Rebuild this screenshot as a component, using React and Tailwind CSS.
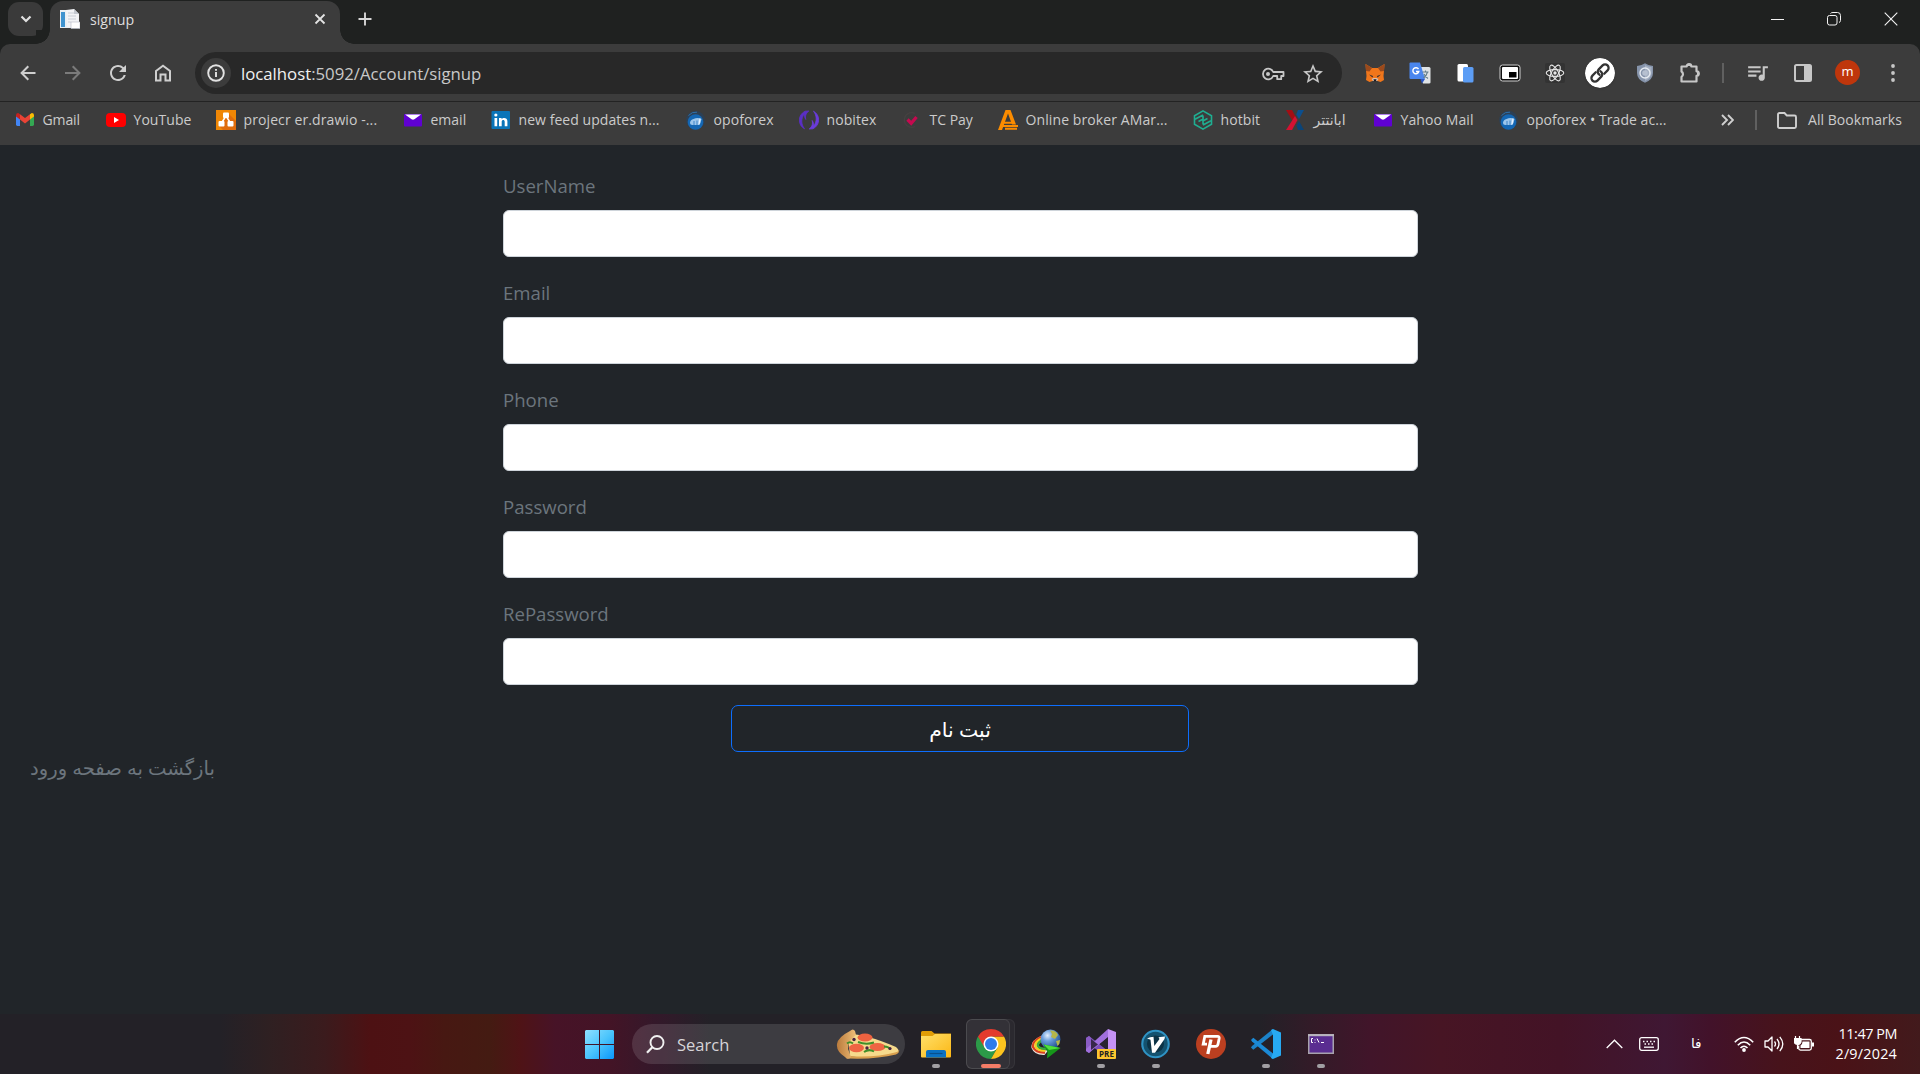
import React from "react";
import { MdRefresh, MdStarBorder, MdQueueMusic } from "react-icons/md";

const S = ({ w = 20, h = w, vb = `0 0 ${w} ${h}`, className = "", children }) => (
  <svg width={w} height={h} viewBox={vb} fill="none" className={`block shrink-0 ${className}`}>
    {children}
  </svg>
);

/* ---------- bookmark icons ---------- */
const Gmail = () => (
  <S>
    <path d="M1 5v9.600q0 1.400 1.400 1.400H5V9z" fill="#4285f4" />
    <path d="M15 9v7h2.600q1.400 0 1.400-1.400V5z" fill="#34a853" />
    <path d="M1 5.200q0-2.200 2.200-2.200L5 4.200V9.500L1 6.600z" fill="#c5221f" />
    <path d="M15 4.200L16.800 3Q19 3 19 5.200v1.400l-4 2.900z" fill="#fbbc04" />
    <path d="M5 4.200l5 3.900 5-3.900v5.300l-5 3.900-5-3.900z" fill="#ea4335" />
  </S>
);
const YouTube = () => (
  <S>
    <rect y="3" width="20" height="14" rx="4" fill="#f00" />
    <path d="M8 7v6l5-3z" fill="#fff" />
  </S>
);
const Drawio = () => (
  <S>
    <rect width="20" height="20" fill="#f08705" />
    <path d="M12 3l8 8v9H7l-4-4 6-8z" fill="#df6c0c" />
    <path d="M10 6L5.500 13M10 6l4.500 7" stroke="#fff" strokeWidth="1.500" />
    <rect x="7" y="2.500" width="6" height="5.500" rx="1" fill="#fff" />
    <rect x="2.500" y="11" width="6" height="5.500" rx="1" fill="#fff" />
    <rect x="11.500" y="11" width="6" height="5.500" rx="1" fill="#fff" />
  </S>
);
const YMail = () => (
  <S>
    <rect x="1" y="4" width="18" height="12.500" rx="1" fill="#5f01d1" />
    <path d="M2 4.500h16l-6.600 4.800q-1.400.8-2.800 0z" fill="#fff" />
  </S>
);
const LinkedIn = () => (
  <S>
    <rect x="0.500" y="1" width="18.500" height="18" rx="1" fill="#0a74b8" />
    <path d="M3.500 8h2.700v8.300H3.500zM8 8h2.600v1.200c1.200-2 5.800-2 5.800 2v5.100h-2.700v-4.600c0-2.300-3-2.100-3 0v4.600H8z" fill="#fff" />
    <circle cx="4.850" cy="5" r="1.600" fill="#fff" />
  </S>
);
const Opo = () => (
  <S>
    <circle cx="9.500" cy="10" r="9.300" fill="#2c4056" />
    <circle cx="9.500" cy="12" r="7.800" fill="#1467b4" />
    <path d="M4 12.500q.5-3 3.500-3.500 4-2 8 0-.5 4-2.500 6H6.500Q4 15 4 12.500z" fill="#9cc6ec" />
    <path d="M8 11v4M11 10.500V15" stroke="#3d84c8" strokeWidth="1" />
    <path d="M14 8.500l-1 6" stroke="#e9f4ff" strokeWidth="1.200" />
    <path d="M2.500 5.500Q6 1.500 11 2.200" stroke="#2f6fa8" strokeWidth="1" />
  </S>
);
const Nobitex = () => (
  <S>
    <path d="M5.500 18.800C-1.500 15 -1.500 5 6 1.200L9.800 1C6.800 3.500 6 6 6.800 9.500 5.500 7.500 5 5 5.500 3.800 2 8 1.800 14 5.500 18.800z" fill="#5b2fc6" stroke="#5b2fc6" strokeWidth=".8" />
    <path d="M14.500 1.200C21.500 5 21.500 15 14 18.800L10.200 19C13.200 16.500 14 14 13.200 10.500 14.500 12.500 15 15 14.500 16.200 18 12 18.200 6 14.500 1.200z" fill="#6b3bdc" stroke="#6b3bdc" strokeWidth=".8" />
  </S>
);
const TCPay = () => (
  <S>
    <path d="M13 3.500A7.300 7.300 0 1 0 13 16.500" stroke="#454141" strokeWidth="1.300" />
    <path d="M5.500 9.500l3.700 3.700 5.300-6.200" stroke="#c5094f" strokeWidth="3.300" />
  </S>
);
const AMarkets = () => (
  <S>
    <path d="M0 20L7.500 0h5L18 14.500h-4L10 3.500 4 20z" fill="#fb8c00" />
    <path d="M5 12.800h11M4.500 16h15.500M7 18.800h12" stroke="#fb8c00" strokeWidth="1.900" />
  </S>
);
const Hotbit = () => (
  <S>
    <path d="M10 .9l8.500 4.800v8.600L10 19.100l-8.500-4.800V5.700z" stroke="#1fae91" strokeWidth="1.600" />
    <path d="M2 9.300l8-4.300M18 10.700l-8 4.300M5.500 11.500L10 9v5.500M14.500 8.500L10 11V5.500" stroke="#1fae91" strokeWidth="1.600" />
  </S>
);
const XM = () => (
  <S>
    <path d="M0 0h6l4 7.500-2.500 5z" fill="#a30d14" />
    <path d="M0 20h6l5.500-10L9 6z" fill="#d31232" />
    <path d="M12 0h6l-5 9-2.800-4.500z" fill="#0b4f8f" />
    <path d="M12 20h6l-5-9-2.500 4.500z" fill="#0a4478" />
  </S>
);

const bookmarks = [
  [Gmail, "Gmail", "w-[91px]", "tracking-[-0.1px]"],
  [YouTube, "YouTube", "w-[110px]", "tracking-[0.05px]"],
  [Drawio, "projecr er.drawio -...", "w-[187px]", "tracking-[0.1px]"],
  [YMail, "email", "w-[88px]", "tracking-[0px]"],
  [LinkedIn, "new feed updates n...", "w-[195px]", "tracking-[0.05px]"],
  [Opo, "opoforex", "w-[113px]", "tracking-[0.1px]"],
  [Nobitex, "nobitex", "w-[103px]", "tracking-[0.1px]"],
  [TCPay, "TC Pay", "w-[96px]", "tracking-[0px]"],
  [AMarkets, "Online broker AMar...", "w-[195px]", "tracking-[0.1px]"],
  [Hotbit, "hotbit", "w-[93px]", "tracking-[0.1px]"],
  [XM, "ابانتتر", "w-[87px]", "tracking-normal"],
  [YMail, "Yahoo Mail", "w-[126px]", "tracking-[0.1px]"],
  [Opo, "opoforex • Trade ac...", "w-[200px]", "tracking-[0.05px]"],
];

/* ---------- extension icons ---------- */
const Fox = () => (
  <S>
    <path d="M.5 1l6.500 4h6l6.500-4-.5 6.500L18.500 13l.5 4-3.500 2-3-1h-5l-3 1L1 17l.5-4L1 7.500z" fill="#f0761b" />
    <path d="M.5 1l6.500 4L4.500 8.500 1 8zM19.500 1L13 5l2.500 3.500L19 8z" fill="#9b4a1c" />
    <path d="M4 11.500l4 1.500-.5 1.500zM16 11.500L12 13l.5 1.500z" fill="#2b2b35" />
    <path d="M6.500 16l2-1h3l2 1-1.500 2H8z" fill="#d8c1b2" />
    <path d="M8.500 16.300h3l-.5 2H9z" fill="#1b1b22" />
  </S>
);
const Translate = () => (
  <S w={22}>
    <path d="M8 5h12q1.500 0 1.500 1.500v14q0 1-1.500 1h-6z" fill="#dfe3e6" />
    <path d="M1.500.5H11L16 17H1.500Q.5 17 .5 16V1.500q0-1 1-1z" fill="#4a86ee" />
    <path d="M11.500 17H16l-3 4.500z" fill="#2a56c6" />
    <path d="M9.500 7.200A3 3 0 1 0 9.800 9.500H7" stroke="#fff" strokeWidth="1.400" />
    <path d="M13.500 10h6M16.500 8.500V10M18.500 10q-1 4-4 6M15 12q1.500 3 4 4.500" stroke="#607d8b" strokeWidth="1.100" />
  </S>
);
const Copy = () => (
  <S>
    <rect x="2.500" y="1" width="10.500" height="17.500" rx="1.500" fill="#fff" />
    <rect x="8" y="4" width="10.500" height="15.500" rx="1.500" fill="#5c9df5" />
  </S>
);
const Pip = () => (
  <S w={22}>
    <rect x="1" y="3" width="20" height="16" rx="2.500" fill="#111" stroke="#cfcfcf" />
    <rect x="3" y="5" width="16" height="12" rx="1" fill="#fff" />
    <rect x="10" y="10" width="7.500" height="5.500" fill="#000" />
  </S>
);
const ReactIcon = () => (
  <S>
    <rect width="20" height="20" rx="2" fill="#333" />
    <g stroke="#e8e8e8" strokeWidth="1.100">
      <ellipse cx="10" cy="10" rx="8.800" ry="3.400" />
      <ellipse cx="10" cy="10" rx="8.800" ry="3.400" transform="rotate(60 10 10)" />
      <ellipse cx="10" cy="10" rx="8.800" ry="3.400" transform="rotate(120 10 10)" />
    </g>
    <circle cx="10" cy="10" r="1.700" fill="#e8e8e8" />
  </S>
);
const Link = () => (
  <S w={30} className="rounded-full shadow">
    <circle cx="15" cy="15" r="15" fill="#fff" />
    <g transform="rotate(-45 15 15)" stroke="#333" strokeWidth="2.300" strokeLinecap="round">
      <path d="M12.500 11.500H7.800a3.500 3.500 0 0 0 0 7h5.500a3.500 3.500 0 0 0 3.300-4.500" />
      <path d="M17.500 18.500h4.700a3.500 3.500 0 0 0 0-7h-5.500a3.500 3.500 0 0 0-3.300 4.500" />
    </g>
  </S>
);
const Shield = () => (
  <S>
    <path d="M10 .3q4 2.700 8 2.700v7q0 6.500-8 9.800Q2 16.500 2 10V3q4 0 8-2.700z" fill="#8694ab" />
    <path d="M10 2q3 2 6.500 2v6q0 5-6.500 8z" fill="#a5b0c2" />
    <circle cx="10" cy="10" r="5" stroke="#e6ebf2" strokeWidth="1.400" />
    <circle cx="10" cy="10" r="2.800" fill="#b6c0d0" />
  </S>
);
const Puzzle = () => (
  <S w={22}>
    <path d="M2.500 4.500h5.200a2.200 2.200 0 0 1 4.600 0h5.200v4.800a2.200 2.200 0 0 1 0 4.600v5.600h-15v-4.600a3.200 3.200 0 0 0 0-5.400z" stroke="#c7c7c7" strokeWidth="2.200" strokeLinejoin="round" />
    <path d="M8 4V3q2-2 4 0v1zM18 9h1q2.500 2.500 0 5h-1z" fill="#c7c7c7" />
  </S>
);
const SidePanel = () => (
  <S>
    <rect x="2" y="2" width="16" height="16" rx="1.500" stroke="#c7c7c7" strokeWidth="2" />
    <rect x="11" y="2" width="7" height="16" fill="#c7c7c7" />
  </S>
);

/* ---------- taskbar icons ---------- */
const Start = () => (
  <S w={29}>
    <defs>
      <linearGradient id="win" x1="0" y1="0" x2="29" y2="29" gradientUnits="userSpaceOnUse">
        <stop stopColor="#8fe0ff" />
        <stop offset=".5" stopColor="#4cc5fc" />
        <stop offset="1" stopColor="#0a96fb" />
      </linearGradient>
    </defs>
    <path d="M1 0h13v14H0V1zM15 0h13l1 1v13H15zM0 15h14v14H1l-1-1zM15 15h14v13l-1 1H15z" fill="url(#win)" />
  </S>
);
const Pizza = () => (
  <S w={64} h={30}>
    <defs>
      <linearGradient id="crust" x1="0" y1="0" x2="1" y2="0">
        <stop stopColor="#b97a3c" />
        <stop offset="1" stopColor="#f0bf78" />
      </linearGradient>
    </defs>
    <path d="M12 5Q30 5 60 18q5 4 0 6-22 6-46 3.500z" fill="#f6da8c" />
    <path d="M14 27q24 2 47-4 2-1 2-2.500 1 3-3 5-20 5-47 4z" fill="#d9a04e" />
    <path d="M14 2q3-3 5 0l1 4q-8 6-8 14 2 5 3 8-3 4-6 0Q0 22 1 15 2 8 14 2z" fill="url(#crust)" />
    <ellipse cx="29" cy="8.500" rx="7.500" ry="4" fill="#ed6240" />
    <ellipse cx="20.500" cy="19" rx="7.500" ry="4.200" fill="#ee6543" />
    <ellipse cx="41.500" cy="18" rx="8" ry="4" fill="#ee6543" />
    <path d="M11 14.500q3-2.500 6 0M22 13q8 3 16 .5M28 23q5-3.500 10-.5M48 17.500q5 0 6 3" stroke="#3f8f2a" strokeWidth="2" />
    <circle cx="18" cy="10.500" r="1.700" fill="#4b2342" />
    <circle cx="31" cy="19" r="1.700" fill="#4b2342" />
    <circle cx="54" cy="19.500" r="1.600" fill="#4b2342" />
  </S>
);
const Folder = () => (
  <S w={30}>
    <defs>
      <linearGradient id="fold" x1="0" y1="0" x2="1" y2="1">
        <stop stopColor="#ffe06a" />
        <stop offset="1" stopColor="#fcb714" />
      </linearGradient>
    </defs>
    <path d="M0 3.500Q0 2 1.500 2h9l3 2.500H30V12H0z" fill="#e19d06" />
    <path d="M0 7h11.500L14 5h16v22.500q0 1-1 1H1q-1 0-1-1z" fill="url(#fold)" />
    <path d="M5 28.500V23q0-2 2-2h16q2 0 2 2v5.500z" fill="#0a71c4" />
    <path d="M8.500 24.500h13" stroke="#08508e" strokeWidth="1.200" />
  </S>
);
const Chrome = () => (
  <S w={30}>
    <path d="M15 30A15 15 0 0 1 2 7.500L15 15l6.500 3.800z" fill="#2c9a48" />
    <path d="M15 7.500h13A15 15 0 0 1 15 30l6.500-11.200z" fill="#fcc31e" />
    <path d="M15 7.500H28Q24 0 15 0 6 0 2 7.500l6.500 11z" fill="#e33b2e" />
    <circle cx="15" cy="15" r="7.500" fill="#fff" />
    <circle cx="15" cy="15" r="6" fill="#2f7bea" />
  </S>
);
const Idm = () => (
  <S w={30}>
    <defs>
      <radialGradient id="globe" cx=".35" cy=".3" r=".8">
        <stop stopColor="#e3efff" />
        <stop offset=".35" stopColor="#6b9fde" />
        <stop offset="1" stopColor="#16407f" />
      </radialGradient>
    </defs>
    <path d="M10 7Q-1 12 .5 19q3 7.500 13 7l4-5q-8 1.500-10-2-1-4 4-8z" fill="#e9e4dc" />
    <path d="M10 8Q1 12.500 2 18q3 6 12 5.500" stroke="#d8401f" strokeWidth="2.400" />
    <path d="M10 9.800Q3.500 13.500 4.500 17.500q2.500 4.500 10 4" stroke="#f5cf1b" strokeWidth="2.400" />
    <path d="M10.500 11.500Q6 14.500 7 17q2 3.500 8 2.500" stroke="#3caa3a" strokeWidth="2.400" />
    <circle cx="19.500" cy="10.500" r="10" fill="url(#globe)" />
    <path d="M19 1.500q6-.5 8 4.500l-3 4-4-2 1-3zM25 12l4-1q0 4-2.500 6z" fill="#b5b54a" />
    <path d="M12.500 15.500l17 3.500L16 29.500l.5-6.500z" fill="#16961a" />
    <path d="M12.500 15.500l17 3.500-11.500 2z" fill="#4fe03c" />
  </S>
);
const VisualStudio = () => (
  <S w={30}>
    <path d="M0 9l3-2 19 15v8L0 12z" fill="#7b4fb8" />
    <path d="M0 9l3-2 2 2v13l-2 2-3-2z" fill="#8a5cc4" />
    <path d="M3 24L22 8V0L0 20v2z" fill="#a06fdc" />
    <path d="M5 10l7 5.500L5 21z" fill="#37284b" />
    <path d="M22 0l8 3v25l-8 2z" fill="#c592f5" />
    <path d="M22 9v12l-8-6z" fill="#2a2430" />
    <rect x="11" y="20" width="19" height="10" rx="1" fill="#fdc62f" />
    <text x="20.500" y="28" textAnchor="middle" fontSize="8" fontWeight="700" fontFamily="Open Sans, sans-serif" fill="#222">PRE</text>
  </S>
);
const VApp = () => (
  <S w={30}>
    <circle cx="14.500" cy="15" r="14.300" fill="#2f93c4" />
    <circle cx="14.500" cy="15" r="12.200" fill="#14526f" />
    <circle cx="14.500" cy="15" r="8.500" fill="#0c3346" />
    <path d="M6 9.500q3-1.800 6.500-1.800l.8 9.300L18.500 10l-1-1.800 6.500-.7-.5 2.500L14 23.800H11l-1.500-13z" fill="#fff" />
  </S>
);
const Psiphon = () => (
  <S w={30}>
    <circle cx="15" cy="15" r="15" fill="#bb3f20" />
    <path d="M11 15.200H7.200L8.800 7.300H21.500q2 0 1.700 2l-1.200 6q-.4 2-2.400 2H13.500" stroke="#fff" strokeWidth="2.800" />
    <path d="M15 10.500L11.800 25" stroke="#fff" strokeWidth="3.300" />
  </S>
);
const VSCode = () => (
  <S w={30}>
    <path d="M0 18.500l2.300 2.300L22 5.500V0L1 17z" fill="#1c82c8" />
    <path d="M0 11l2.300-2.300L22 24.500V30L1 12.500z" fill="#1b8ad6" />
    <path d="M22 0l8 3.500v23L22 30l-2-1 2-5V6l-2-5z" fill="#27a9f2" />
  </S>
);
const Terminal = () => (
  <S w={26} h={20}>
    <rect x=".75" y=".75" width="24.500" height="18.500" fill="#5a2d91" stroke="#a7a2ad" strokeWidth="1.500" />
    <path d="M0 1.200h26" stroke="#b9b4be" strokeWidth="2" />
    <path d="M5 4.500H3.500v4H5M7 5.500v.8M7 8v.8M9 4.500l2 4M13 8.500h3" stroke="#fff" strokeWidth="1" />
  </S>
);

const apps = [
  [Folder, true],
  [Chrome, "active"],
  [Idm, false],
  [VisualStudio, true],
  [VApp, true],
  [Psiphon, false],
  [VSCode, true],
  [Terminal, true],
];

const Slot = ({ children }) => <div className="flex w-[45px] shrink-0 items-center justify-center">{children}</div>;

function TabStrip() {
  return (
    <div className="flex h-[44px] bg-[#1f2120]">
      <div className="ml-[8px] mt-[2px] flex h-[34px] w-[35px] items-center justify-center rounded-[11px] bg-[#3a3a3a]">
        <S w={12}>
          <path d="M1.500 3.500L6 8l4.500-4.500" stroke="#e0e0e0" strokeWidth="2.200" />
        </S>
      </div>
      <div className="w-[7px]" />
      <div className="relative mt-px flex h-[43px] w-[290px] items-start rounded-t-[13px] bg-[#3c3c3c] pl-[10px]">
        <div className="absolute -left-[14px] bottom-0 size-[14px] bg-[radial-gradient(circle_at_0_0,#1f2120_13.5px,#3c3c3c_14px)]" />
        <div className="absolute -right-[14px] bottom-0 size-[14px] bg-[radial-gradient(circle_at_100%_0,#1f2120_13.5px,#3c3c3c_14px)]" />
        <S className="mt-[8px]">
          <path d="M0 1h14v18H0z" fill="#e8eef3" />
          <path d="M1 3h4v15H1z" fill="#3f93cf" />
          <path d="M6 1l8-1 5 5v13H7z" fill="#f2f3f6" />
          <path d="M8 4h6M8 7h8M8 10h8M8 13h3" stroke="#c9ced6" />
          <path d="M14 0v5h5z" fill="#c3c8d0" />
          <path d="M11 13h9v6.500h-9z" fill="#fff" stroke="#b5bbc6" strokeWidth=".6" />
        </S>
        <span className="ml-[10px] mt-[8px] text-[14.2px] leading-[22px] text-[#dedede]">signup</span>
        <S w={12} className="ml-auto mr-[14px] mt-[12px]">
          <path d="M1.500 1.500l9 9M10.500 1.500l-9 9" stroke="#e3e3e3" strokeWidth="1.800" />
        </S>
      </div>
      <S w={14} className="ml-[18px] mt-[12px]">
        <path d="M7 .5v13M.5 7h13" stroke="#d6d6d6" strokeWidth="1.900" />
      </S>
      <div className="ml-auto mr-[22px] flex h-[38px] items-center gap-[43px]">
        <S w={13}>
          <path d="M0 6.500h13" stroke="#f4f4f4" />
        </S>
        <S w={14}>
          <rect x=".5" y="3.500" width="9.500" height="9.500" rx="2" stroke="#f4f4f4" />
          <path d="M3.500 1.500Q4 .5 6 .5h4.500q3 0 3 3v5q0 1.500-1.500 2" stroke="#f4f4f4" />
        </S>
        <S w={14}>
          <path d="M.7.7l12.600 12.600M13.300.7L.7 13.300" stroke="#f4f4f4" strokeWidth="1.100" />
        </S>
      </div>
    </div>
  );
}

function Toolbar() {
  return (
    <div className="bg-[#1f2120]">
      <div className="flex h-[58px] items-center rounded-t-[10px] border-b border-[#232323] bg-[#3c3c3c] pl-[5px]">
        <Slot>
          <S w={16}>
            <path d="M15.500 8H2M8.300 1.300L1.600 8l6.700 6.700" stroke="#cfcfcf" strokeWidth="2" />
          </S>
        </Slot>
        <Slot>
          <S w={16}>
            <path d="M0 8h14M7.700 1.300L14.400 8l-6.700 6.700" stroke="#7b7b7b" strokeWidth="2" />
          </S>
        </Slot>
        <Slot>
          <MdRefresh size={24} color="#cfcfcf" />
        </Slot>
        <Slot>
          <S w={18}>
            <path d="M2 7l7-5.300L16 7v9.500h-4.500v-6h-5v6H2z" stroke="#cfcfcf" strokeWidth="2" />
          </S>
        </Slot>
        <div className="ml-[10px] flex h-[42px] w-[1147px] items-center rounded-full bg-[#282828] pl-[6px] pr-[17px]">
          <div className="flex size-[30px] items-center justify-center rounded-full bg-[#3c3c3c]">
            <S w={18}>
              <circle cx="9" cy="9" r="7.800" stroke="#e3e3e3" strokeWidth="1.900" />
              <path d="M9 8v5M9 5v1.800" stroke="#e3e3e3" strokeWidth="1.900" />
            </S>
          </div>
          <span className="ml-[10px] pt-[2px] text-[16.8px] tracking-[-0.02px] text-[#c9c9c9]">
            <span className="text-[#f1f1f1]">localhost</span>:5092/Account/signup
          </span>
          <div className="ml-auto flex items-center gap-[16px] pt-[2px]">
            <S w={24} h={14}>
              <path d="M12.200 5H22.500v4h-2.300v3.200h-4V9h-4A5.300 5.300 0 1 1 12.200 5z" stroke="#c7c7c7" strokeWidth="1.800" strokeLinejoin="round" />
              <circle cx="7" cy="7" r="2" fill="#c7c7c7" />
            </S>
            <MdStarBorder size={24} color="#c7c7c7" />
          </div>
        </div>
        <div className="ml-[10px] flex items-center">
          <Slot><Fox /></Slot>
          <Slot><Translate /></Slot>
          <Slot><Copy /></Slot>
          <Slot><Pip /></Slot>
          <Slot><ReactIcon /></Slot>
          <Slot><Link /></Slot>
          <Slot><Shield /></Slot>
          <Slot><Puzzle /></Slot>
          <div className="ml-[10px] mr-[11px] h-[20px] w-[2px] bg-[#606060]" />
          <Slot><MdQueueMusic size={25} color="#c7c7c7" /></Slot>
          <Slot><SidePanel /></Slot>
          <Slot>
            <div className="flex size-[25px] items-center justify-center rounded-full bg-[#bf360c] pb-[2px] text-[13px] leading-none text-white">m</div>
          </Slot>
          <Slot>
            <S w={4} h={18}>
              <circle cx="2" cy="2" r="1.900" fill="#c7c7c7" />
              <circle cx="2" cy="9" r="1.900" fill="#c7c7c7" />
              <circle cx="2" cy="16" r="1.900" fill="#c7c7c7" />
            </S>
          </Slot>
        </div>
      </div>
    </div>
  );
}

function BookmarkBar() {
  return (
    <div className="flex h-[43px] items-center bg-[#3c3c3c] pb-[7px] pl-[15px] text-[14px] text-[#cbcbcb]">
      {bookmarks.map(([Icon, label, width, tracking], i) => (
        <div key={i} className={`flex shrink-0 items-center gap-[7.5px] whitespace-nowrap ${width} ${tracking}`}>
          <Icon />
          <span className="pb-[2px]">{label}</span>
        </div>
      ))}
      <S w={13} h={12} className="ml-[22px]">
        <path d="M1 1l5 5-5 5M7 1l5 5-5 5" stroke="#cfcfcf" strokeWidth="1.900" />
      </S>
      <div className="ml-[21px] h-[20px] w-[2px] bg-[#606060]" />
      <S w={20} h={17} className="ml-[20px]">
        <path d="M1 2.500Q1 1 2.500 1h5l2.300 2.500h7.700Q19 3.500 19 5v9.500q0 1.500-1.500 1.500h-15Q1 16 1 14.500z" stroke="#cfcfcf" strokeWidth="1.900" />
      </S>
      <span className="ml-[11px] whitespace-nowrap pb-[2px] tracking-[0.05px]">All Bookmarks</span>
    </div>
  );
}

function SignupPage() {
  return (
    <main className="h-[869px] bg-[#212529] pt-[25px] text-[18.6px] text-[#6c757d]">
      <form className="ml-[503px] w-[915px]">
        {["UserName", "Email", "Phone", "Password", "RePassword"].map((name) => (
          <div key={name} className="mb-[20px]">
            <label className="mb-[10px] block h-[30px] leading-[31.6px]">{name}</label>
            <input className="block h-[47px] w-full rounded-[6px] border border-[#ced4da] bg-white" />
          </div>
        ))}
        <button type="button" className="ml-[228px] block h-[47px] w-[458px] rounded-[7px] border border-[#0d6efd] pt-[2px] text-[20.4px] text-white">
          ثبت نام
        </button>
      </form>
      <a className="ml-[30px] block w-fit text-[19.6px] leading-[32px]" dir="rtl">بازگشت به صفحه ورود</a>
    </main>
  );
}

function Taskbar() {
  return (
    <footer className="flex h-[60px] items-center bg-[linear-gradient(90deg,#232127_0,#232127_220px,#2f2022_270px,#3b1b1d_325px,#4d1113_370px,#4d1214_410px,#471812_445px,#441b12_490px,#4f1316_520px,#471327_555px,#431426_610px,#34182a_655px,#232127_710px,#232127_1260px,#321b28_1310px,#41152a_1370px,#471524_1440px,#431326_1560px,#3f1733_1665px,#42122a_1710px,#47131b_1780px,#4a1217_1840px,#421a1c_1920px)] text-white">
      <div className="ml-[585px] flex items-center">
        <Start />
        <div className="ml-[18px] flex h-[40px] w-[273px] items-center rounded-full bg-white/12 pl-[14px] pr-[5px]">
          <S w={19}>
            <circle cx="11" cy="7.500" r="6.500" stroke="#f0f0f0" strokeWidth="1.900" />
            <path d="M6.300 12.200L1 17.800" stroke="#f0f0f0" strokeWidth="2.200" />
          </S>
          <span className="ml-[12px] pt-[2px] text-[16.5px] text-[#d6d4d8]">Search</span>
          <div className="ml-auto"><Pizza /></div>
        </div>
      </div>
      <div className="ml-[3px] flex">
        {apps.map(([Icon, state], i) => (
          <div key={i} className="relative flex h-[60px] w-[55px] items-center justify-center">
            {state === "active" && (
              <>
                <div className="absolute left-[3px] top-[5px] h-[50px] w-[49px] rounded-[6px] border border-white/5 bg-white/4" />
                <div className="absolute left-[3px] top-[5px] h-[50px] w-[44px] rounded-[6px] border border-white/8 bg-white/4" />
              </>
            )}
            <div className="relative"><Icon /></div>
            {state === true && <div className="absolute bottom-[6px] h-[4px] w-[8px] rounded-full bg-[#a19fa3]" />}
            {state === "active" && <div className="absolute bottom-[6px] h-[4px] w-[20px] rounded-full bg-[#f47c67]" />}
          </div>
        ))}
      </div>
      <div className="ml-auto mr-[23px] flex items-center">
        <S w={17} h={10}>
          <path d="M.7 9l7.800-7.800L16.300 9" stroke="#fff" strokeWidth="1.300" />
        </S>
        <S w={20} h={14} className="ml-[16px]">
          <rect x=".7" y=".7" width="18.600" height="12.600" rx="2" stroke="#fff" strokeWidth="1.300" />
          <path d="M4 4.500h12.500M5.500 7h10" stroke="#fff" strokeWidth="1.500" strokeDasharray="1.500 2" />
          <path d="M5 10.200h10" stroke="#fff" strokeWidth="1.300" />
        </S>
        <span className="ml-[32px] w-[12px] pb-px text-[13.5px]">فا</span>
        <S w={20} h={16} className="ml-[31px]">
          <path d="M.8 6.200q9.200-9.400 18.400 0M3.800 9.200q6.200-6.400 12.400 0M6.500 12q3.500-3.600 7 0" stroke="#fff" strokeWidth="1.600" />
          <circle cx="10" cy="14" r="1.900" fill="#fff" />
        </S>
        <S w={20} h={18} className="ml-[10px]">
          <path d="M1 6h3l4-4v14l-4-4H1z" stroke="#fff" strokeWidth="1.300" strokeLinejoin="round" />
          <path d="M10.500 6.500q2 2.500 0 5M13 4q4 5 0 10M15.800 1.800q6 7.200 0 14.400" stroke="#fff" strokeWidth="1.300" />
        </S>
        <S w={20} h={16} className="ml-[10px]">
          <path d="M7 3.500h8.500q1.800 0 1.800 1.800v7q0 1.800-1.800 1.800H6.500q-1.800 0-1.800-1.800V9.500" stroke="#fff" strokeWidth="1.300" />
          <path d="M8.500 5.500h7v6.500h-9V9.500q2-1 2-4zM18 6.500h2v4h-2z" fill="#fff" />
          <path d="M0 2.500h7V6q-1 2.500-3.500 2.500T0 6zM1.500 0v2.500M5.500 0v2.500M3.500 8v5" fill="#fff" stroke="#fff" strokeWidth="1.200" />
        </S>
        <div className="ml-[20px] w-[63px] whitespace-nowrap text-right leading-[20px]">
          <div className="text-[14.4px] tracking-[-0.45px]">11:47 PM</div>
          <div className="text-[14.4px] tracking-[0.2px]">2/9/2024</div>
        </div>
      </div>
    </footer>
  );
}

export default function App() {
  return (
    <div className="h-[1074px] w-[1920px] overflow-hidden font-['Open_Sans','DejaVu_Sans',sans-serif]">
      <TabStrip />
      <Toolbar />
      <BookmarkBar />
      <SignupPage />
      <Taskbar />
    </div>
  );
}
